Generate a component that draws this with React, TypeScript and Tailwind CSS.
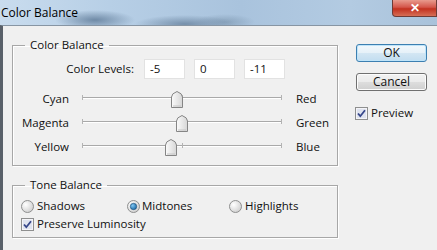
import React from "react";

const SLIDERS = [
  { left: "Cyan", right: "Red", value: -5 },
  { left: "Magenta", right: "Green", value: 0 },
  { left: "Yellow", right: "Blue", value: -11 },
];

function Thumb() {
  return (
    <svg width="12" height="17" viewBox="0 0 12 17">
      <defs>
        <linearGradient id="thumbFill" x1="0" y1="0" x2="1" y2="0">
          <stop offset="0" stopColor="#fbfbfb" />
          <stop offset="1" stopColor="#d6d6d6" />
        </linearGradient>
      </defs>
      <path
        d="M0.5 6 Q0.5 2.5 6 0.5 Q11.5 2.5 11.5 6 V16.5 H0.5 Z"
        fill="url(#thumbFill)"
        stroke="#858585"
      />
      <path d="M2 15 H10" stroke="#c4c4c4" />
    </svg>
  );
}

function Slider({ value }: { value: number }) {
  // 200px track for -100..100, one pixel per step
  const center = 100 + value;
  return (
    <div className="relative w-[200px] h-[17px]">
      <div className="absolute left-0 right-0 top-[6px] h-[2px] border-t border-[#a9a9a9] bg-white" />
      <div className="absolute left-0 top-[4px] w-px h-[5px] bg-[#b3b3b3]" />
      <div className="absolute left-[100px] top-[4px] w-px h-[5px] bg-[#b3b3b3]" />
      <div className="absolute right-0 top-[4px] w-px h-[5px] bg-[#b3b3b3]" />
      <div className="absolute top-0" style={{ left: center - 6 }}>
        <Thumb />
      </div>
    </div>
  );
}

function Radio({ checked }: { checked?: boolean }) {
  return (
    <svg width="13" height="13" viewBox="0 0 13 13">
      <defs>
        <radialGradient id="radioFill" cx="0.35" cy="0.35" r="0.8">
          <stop offset="0" stopColor="#ffffff" />
          <stop offset="1" stopColor="#c9c9c9" />
        </radialGradient>
        <radialGradient id="radioDot" cx="0.35" cy="0.35" r="0.8">
          <stop offset="0" stopColor="#7fc6f2" />
          <stop offset="1" stopColor="#0f5e9c" />
        </radialGradient>
      </defs>
      <circle cx="6.5" cy="6.5" r="6" fill="url(#radioFill)" stroke="#8e8f8f" />
      {checked && <circle cx="6.5" cy="6.5" r="3.2" fill="url(#radioDot)" stroke="#1b4a74" strokeWidth="0.6" />}
    </svg>
  );
}

function Checkbox() {
  return (
    <svg width="13" height="13" viewBox="0 0 13 13">
      <rect x="0.5" y="0.5" width="12" height="12" fill="#f4f4f8" stroke="#8e8f8f" />
      <rect x="2" y="2" width="9" height="9" fill="#dfe3ef" />
      <path d="M3 6.5 L5.3 9.2 L10 3.2" fill="none" stroke="#35468a" strokeWidth="1.8" />
    </svg>
  );
}

export default function App() {
  return (
    <div className="w-[437px] h-[250px] overflow-hidden bg-[#f0f0f0] font-['Open_Sans',sans-serif] text-[11.5px] leading-[16px] text-[#111]">
      {/* Title bar */}
      <div className="relative h-[25px] flex items-center pl-[1px] bg-[radial-gradient(ellipse_40px_10px_at_95px_20px,#6f8aa6,transparent),radial-gradient(ellipse_50px_9px_at_185px_24px,#7690ab,transparent),radial-gradient(ellipse_30px_8px_at_225px_22px,#8aa4bd,transparent),linear-gradient(90deg,#c9dcee_0%,#b7cfe6_25%,#a9c3dd_55%,#b3cbe2_80%,#a9c2da_100%)]">
        <span className="text-[12px] text-black">Color Balance</span>
        <div className="absolute right-0 top-0 w-[45px] h-[17px] rounded-bl-[4px] border border-t-0 border-[#6e3b36] bg-[linear-gradient(180deg,#e89a8d_0%,#d4564a_45%,#c2311f_55%,#d66e56_100%)] flex items-center justify-center text-white font-bold text-[12px] leading-none">
          ✕
        </div>
      </div>

      {/* Body */}
      <div className="flex h-[225px] border-l-[3px] border-t border-[#596069] border-t-[#8795a3] pl-[9px] pt-[11px]">
        <div className="w-[326px] flex flex-col gap-[11px]">
          <fieldset className="h-[129px] border border-[#a7a7a7] shadow-[inset_1px_1px_0_#fff,1px_1px_0_#fff]">
            <legend className="ml-[12px] px-[5px] leading-[16px]">Color Balance</legend>
            <div className="flex items-center mt-[6px] h-[20px]">
              <span className="w-[121px] text-right">Color Levels:</span>
              <div className="flex gap-[9px] ml-[10px]">
                {["-5", "0", "-11"].map((v) => (
                  <div
                    key={v}
                    className="w-[41px] h-[20px] bg-white border border-[#e2e2e2] flex items-center pl-[5px]"
                  >
                    {v}
                  </div>
                ))}
              </div>
            </div>
            <div className="mt-[8px] flex flex-col">
              {SLIDERS.map((s) => (
                <div key={s.left} className="flex items-center h-[24px]">
                  <span className="w-[56px] text-right">{s.left}</span>
                  <div className="ml-[13px]">
                    <Slider value={s.value} />
                  </div>
                  <span className="ml-[14px]">{s.right}</span>
                </div>
              ))}
            </div>
          </fieldset>

          <fieldset className="h-[61px] border border-[#a7a7a7] shadow-[inset_1px_1px_0_#fff,1px_1px_0_#fff]">
            <legend className="ml-[12px] px-[5px] leading-[16px]">Tone Balance</legend>
            <div className="flex items-center h-[18px] mt-[4px] pl-[8px]">
              <label className="w-[106px] flex items-center gap-[3px]">
                <Radio />
                <span>Shadows</span>
              </label>
              <label className="w-[102px] flex items-center gap-[2px]">
                <Radio checked />
                <span>Midtones</span>
              </label>
              <label className="flex items-center gap-[3px]">
                <Radio />
                <span>Highlights</span>
              </label>
            </div>
            <label className="flex items-center gap-[3px] h-[18px] pl-[8px]">
              <Checkbox />
              <span>Preserve Luminosity</span>
            </label>
          </fieldset>
        </div>

        {/* Buttons */}
        <div className="ml-[18px] mt-[7px] flex flex-col">
          <button className="w-[71px] h-[18px] rounded-[3px] border border-[#3c7fb1] bg-[linear-gradient(180deg,#f2f8fc_0%,#e6f1f8_48%,#d3e6f3_52%,#c2ddf0_100%)] shadow-[inset_0_0_0_1px_#bfe4f9] text-[12px] leading-none">
            OK
          </button>
          <button className="mt-[11px] w-[71px] h-[18px] rounded-[3px] border border-[#707070] bg-[linear-gradient(180deg,#f2f2f2_0%,#ebebeb_48%,#dddddd_52%,#cfcfcf_100%)] shadow-[inset_0_0_0_1px_#fcfcfc] text-[12px] leading-none">
            Cancel
          </button>
          <label className="mt-[14px] flex items-center gap-[3px] -ml-[1px]">
            <Checkbox />
            <span>Preview</span>
          </label>
        </div>
      </div>
    </div>
  );
}
